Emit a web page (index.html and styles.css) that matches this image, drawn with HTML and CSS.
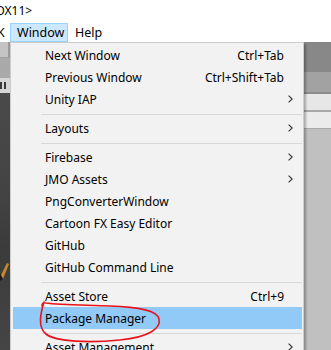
FILE: index.html
```html
<!DOCTYPE html>
<html>
<head>
<meta charset="utf-8">
<link rel="stylesheet" href="styles.css">
</head>
<body>
<div class="screen">
  <div class="titlebar"><span class="title">DX11&gt;</span></div>
  <div class="menubar">
    <span class="mb-item mb-cut">K</span>
    <span class="mb-item mb-active">Window</span>
    <span class="mb-item mb-help">Help</span>
  </div>
  <div class="editor">
    <div class="col-left">
      <div class="l1"></div>
      <div class="l2"></div>
      <div class="l3"><span class="pause"></span></div>
      <div class="l4"><svg class="deco" width="10" height="30" viewBox="0 0 10 30"><path d="M0 22 L7 8 L9 9 L3 24 Z" fill="#c8872c"/><path d="M0 26 L3 24 L0 18 Z" fill="#1a1a1a"/></svg></div>
    </div>
    <div class="col-mid"></div>
    <div class="col-right">
      <div class="r1"></div>
      <div class="r2"></div>
      <div class="r3"></div>
      <div class="r4"></div>
      <div class="r5"></div>
      <div class="r6"></div>
    </div>
  </div>

  <div class="menu">
    <div class="item"><span class="label">Next Window</span><span class="key">Ctrl+Tab</span><span class="sub"></span></div>
    <div class="item"><span class="label">Previous Window</span><span class="key">Ctrl+Shift+Tab</span><span class="sub"></span></div>
    <div class="item"><span class="label">Unity IAP</span><span class="sub"><svg width="5" height="8" viewBox="0 0 5 8"><path d="M0.6 0.6 L4.2 4 L0.6 7.4" fill="none" stroke="#333" stroke-width="1.1"/></svg></span></div>
    <div class="sep"></div>
    <div class="item"><span class="label">Layouts</span><span class="sub"><svg width="5" height="8" viewBox="0 0 5 8"><path d="M0.6 0.6 L4.2 4 L0.6 7.4" fill="none" stroke="#333" stroke-width="1.1"/></svg></span></div>
    <div class="sep"></div>
    <div class="item"><span class="label">Firebase</span><span class="sub"><svg width="5" height="8" viewBox="0 0 5 8"><path d="M0.6 0.6 L4.2 4 L0.6 7.4" fill="none" stroke="#333" stroke-width="1.1"/></svg></span></div>
    <div class="item"><span class="label">JMO Assets</span><span class="sub"><svg width="5" height="8" viewBox="0 0 5 8"><path d="M0.6 0.6 L4.2 4 L0.6 7.4" fill="none" stroke="#333" stroke-width="1.1"/></svg></span></div>
    <div class="item"><span class="label">PngConverterWindow</span><span class="sub"></span></div>
    <div class="item"><span class="label">Cartoon FX Easy Editor</span><span class="sub"></span></div>
    <div class="item"><span class="label">GitHub</span><span class="sub"></span></div>
    <div class="item"><span class="label">GitHub Command Line</span><span class="sub"></span></div>
    <div class="sep"></div>
    <div class="item"><span class="label">Asset Store</span><span class="key">Ctrl+9</span><span class="sub"></span></div>
    <div class="item item-hl"><span class="label">Package Manager</span><span class="sub"></span></div>
    <div class="sep"></div>
    <div class="item"><span class="label">Asset Management</span><span class="sub"><svg width="5" height="8" viewBox="0 0 5 8"><path d="M0.6 0.6 L4.2 4 L0.6 7.4" fill="none" stroke="#333" stroke-width="1.1"/></svg></span></div>
  </div>

  <svg class="annot" width="331" height="350" viewBox="0 0 331 350">
    <path d="M44 302 C41 312 37 327 46 334 C56 342 90 343 120 340 C150 337 161 328 159 319 C157 310 138 307 110 306 C86 305 60 305 46 303 C43 302 42 304 42 306" fill="none" stroke="#e8141c" stroke-width="1.6" stroke-linecap="round"/>
  </svg>
</div>
</body>
</html>
```
FILE: styles.css
```css
html, body {
  margin: 0;
  padding: 0;
  background: #ffffff;
}
.screen {
  position: relative;
  width: 331px;
  height: 350px;
  overflow: hidden;
  font-family: "Noto Sans", "Noto Sans CJK KR", sans-serif;
  color: #000;
}
.titlebar {
  height: 23px;
  box-sizing: border-box;
  padding-top: 2px;
  background: #fff;
  font-size: 12px;
  line-height: 18px;
}
.title {
  display: inline-block;
  margin-left: -4px;
}
.menubar {
  height: 19px;
  display: flex;
  background: #fff;
  font-size: 12.5px;
  line-height: 17px;
}
.mb-item {
  display: block;
  box-sizing: border-box;
  height: 19px;
  border: 1px solid transparent;
}
.mb-cut {
  width: 10px;
  overflow: hidden;
  text-indent: -3px;
  border: 0;
  line-height: 19px;
}
.mb-active {
  width: 58px;
  padding-left: 6px;
  background: #cce8ff;
  border-color: #99d1ff;
}
.mb-help {
  padding-left: 6px;
}
.editor {
  display: flex;
  height: 308px;
}
.col-left {
  width: 10px;
  display: flex;
  flex-direction: column;
}
.l1 {
  height: 16px;
  background: #c4c4c4;
  box-sizing: border-box;
  border-right: 2px solid #9a9a9a;
  border-bottom: 1px solid #a0a0a0;
}
.l2 {
  height: 20px;
  background: #a9a9a9;
}
.l3 {
  height: 15px;
  background: #d6d6d6;
  position: relative;
}
.pause {
  position: absolute;
  left: 0;
  top: 4px;
  width: 2px;
  height: 7px;
  background: #3a3a3a;
  box-shadow: 4px 0 0 #3a3a3a;
}
.l4 {
  flex: 1;
  background: linear-gradient(180deg, #4a4a4a 0%, #434343 40%, #3b3b3b 60%, #454545 100%);
  position: relative;
}
.deco {
  position: absolute;
  left: 0;
  top: 162px;
}
.col-mid {
  flex: 1;
  background: #c0c0c0;
}
.col-right {
  width: 27px;
  display: flex;
  flex-direction: column;
}
.r1 { height: 30px; background: #888888; }
.r2 { height: 20px; background: #a2a2a2; }
.r3 { height: 2px; background: #8d8d8d; }
.r4 { height: 16px; background: #e7e7e7; border-bottom: 2px solid #a8a8a8; }
.r5 { height: 16px; background: #ebebeb; border-bottom: 1px solid #a8a8a8; }
.r6 { flex: 1; background: #c0c0c0; }

.menu {
  position: absolute;
  left: 10px;
  top: 42px;
  width: 294px;
  height: 330px;
  box-sizing: border-box;
  border: 1px solid #cccccc;
  background: #f2f2f2;
  padding: 1px 1px 0 2px;
  box-shadow: 2px 2px 2px rgba(0, 0, 0, 0.28);
  font-size: 12px;
}
.item {
  display: flex;
  align-items: center;
  height: 22px;
  padding-left: 32px;
  white-space: nowrap;
}
.item-hl {
  background: #91c9f7;
}
.label {
  flex: 1;
}
.key {
  text-align: right;
}
.sub {
  width: 18px;
  display: flex;
  align-items: center;
  padding-left: 4px;
  box-sizing: border-box;
}
.sub svg {
  display: block;
}
.sep {
  height: 4px;
  margin: 0 0 2px 28px;
  border-bottom: 1px solid #d7d7d7;
}
.annot {
  position: absolute;
  left: 0;
  top: 0;
  pointer-events: none;
}
```
